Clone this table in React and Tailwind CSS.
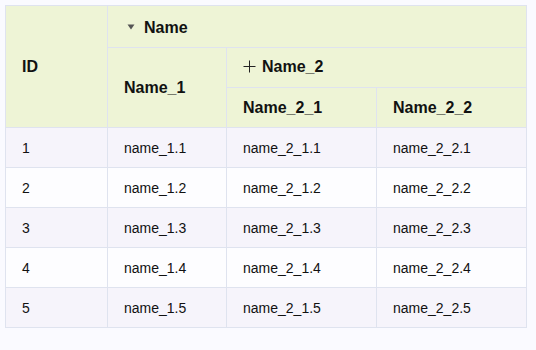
import React from "react";

const rows = [1, 2, 3, 4, 5];

function Tri() {
  return (
    <svg width="8" height="6" viewBox="0 0 8 6" className="inline-block ml-[3px] mr-[9px] mb-[2px]">
      <path d="M0.5 0.5 L7.5 0.5 L4 5.5 Z" fill="#555" />
    </svg>
  );
}

function Plus() {
  return (
    <svg width="13" height="13" viewBox="0 0 13 13" className="inline-block mr-[6px]">
      <path d="M6.5 0.5 V12.5 M0.5 6.5 H12.5" stroke="#222" strokeWidth="1" fill="none" />
    </svg>
  );
}

export default function App() {
  const th = "border border-[#dfe3ef] px-4 text-left align-middle font-bold text-[16px] text-[#111] h-10 leading-5";
  const td = "border border-[#dfe3ef] px-4 text-left align-middle text-[14px] text-[#111] h-10 leading-5";
  return (
    <div className="w-[536px] h-[350px] bg-[#fafaff] pt-[5px] pl-[5px]" style={{ fontFamily: '"Liberation Sans", Arial, sans-serif' }}>
      <table className="border-collapse table-fixed w-[521px] border border-[#d6e0ad]">
        <colgroup>
          <col className="w-[102px]" />
          <col className="w-[119px]" />
          <col className="w-[150px]" />
          <col className="w-[150px]" />
        </colgroup>
        <thead className="bg-[#eef4d6]">
          <tr>
            <th rowSpan={3} className={th}>ID</th>
            <th colSpan={3} className={th + " h-[42px]"}>
              <span className="inline-flex items-center">
                <Tri />
                Name
              </span>
            </th>
          </tr>
          <tr>
            <th rowSpan={2} className={th}>Name_1</th>
            <th colSpan={2} className={th}>
              <span className="inline-flex items-center">
                <Plus />
                Name_2
              </span>
            </th>
          </tr>
          <tr>
            <th className={th}>Name_2_1</th>
            <th className={th}>Name_2_2</th>
          </tr>
        </thead>
        <tbody>
          {rows.map((r) => (
            <tr key={r} className={r % 2 === 1 ? "bg-[#f6f4fb]" : "bg-[#fdfdff]"}>
              <td className={td}>{r}</td>
              <td className={td}>name_1.{r}</td>
              <td className={td}>name_2_1.{r}</td>
              <td className={td}>name_2_2.{r}</td>
            </tr>
          ))}
        </tbody>
      </table>
    </div>
  );
}
